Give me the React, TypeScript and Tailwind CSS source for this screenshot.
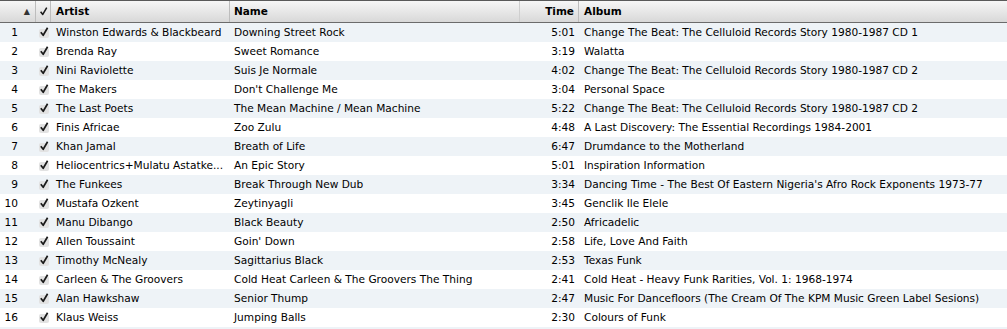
import React from "react";

const rows: [string, string, string, string][] = [
  ["Winston Edwards & Blackbeard", "Downing Street Rock", "5:01", "Change The Beat: The Celluloid Records Story 1980-1987 CD 1"],
  ["Brenda Ray", "Sweet Romance", "3:19", "Walatta"],
  ["Nini Raviolette", "Suis Je Normale", "4:02", "Change The Beat: The Celluloid Records Story 1980-1987 CD 2"],
  ["The Makers", "Don't Challenge Me", "3:04", "Personal Space"],
  ["The Last Poets", "The Mean Machine / Mean Machine", "5:22", "Change The Beat: The Celluloid Records Story 1980-1987 CD 2"],
  ["Finis Africae", "Zoo Zulu", "4:48", "A Last Discovery: The Essential Recordings 1984-2001"],
  ["Khan Jamal", "Breath of Life", "6:47", "Drumdance to the Motherland"],
  ["Heliocentrics+Mulatu Astatke...", "An Epic Story", "5:01", "Inspiration Information"],
  ["The Funkees", "Break Through New Dub", "3:34", "Dancing Time - The Best Of Eastern Nigeria's Afro Rock Exponents 1973-77"],
  ["Mustafa Ozkent", "Zeytinyagli", "3:45", "Genclik Ile Elele"],
  ["Manu Dibango", "Black Beauty", "2:50", "Africadelic"],
  ["Allen Toussaint", "Goin' Down", "2:58", "Life, Love And Faith"],
  ["Timothy McNealy", "Sagittarius Black", "2:53", "Texas Funk"],
  ["Carleen & The Groovers", "Cold Heat Carleen & The Groovers The Thing", "2:41", "Cold Heat - Heavy Funk Rarities, Vol. 1: 1968-1974"],
  ["Alan Hawkshaw", "Senior Thump", "2:47", "Music For Dancefloors (The Cream Of The KPM Music Green Label Sesions)"],
  ["Klaus Weiss", "Jumping Balls", "2:30", "Colours of Funk"],
];

const cols = "grid grid-cols-[36px_15px_179px_290px_59px_1fr]";

function CheckMark({ className }: { className?: string }) {
  return (
    <svg viewBox="0 0 10 10" className={className}>
      <path d="M1.8 5.2 L4.2 8.3 L8.6 0.8" fill="none" stroke="#1a1a1a" strokeWidth="1.7" strokeLinejoin="round" />
    </svg>
  );
}

function Check() {
  return (
    <span className="relative block h-[9px] w-[10px] rounded-[2px] bg-[#e2e2e2]">
      <CheckMark className="absolute left-[0px] top-[-2px] h-[10px] w-[10px]" />
    </span>
  );
}

export default function App() {
  return (
    <div className="h-[329px] w-[1007px] overflow-hidden bg-white font-['DejaVu_Sans',sans-serif] text-[10.6px] text-black">
      <div className="border-t border-t-[#5a5a5a] border-b border-b-[#6b6b6b] bg-gradient-to-b from-[#f7f7f7] to-[#d8d8d8]">
        <div className={`${cols} h-[21px] text-[10.5px] font-bold`}>
          <div className="flex items-center justify-end border-r border-r-[#bdbdbd] pr-[5px]">
            <span className="text-[8px] text-[#333]">▲</span>
          </div>
          <div className="flex items-center justify-center border-r border-r-[#bdbdbd]">
            <CheckMark className="h-[9px] w-[9px]" />
          </div>
          <div className="flex items-center border-r border-r-[#bdbdbd] pl-[5px]">Artist</div>
          <div className="flex items-center border-r border-r-[#cfcfcf] pl-[4px]">Name</div>
          <div className="flex items-center justify-end border-r border-r-[#bdbdbd] pr-[4px]">Time</div>
          <div className="flex items-center pl-[5px]">Album</div>
        </div>
      </div>
      {rows.map((r, i) => (
        <div key={i} className={`${cols} h-[19px] items-center pt-[1px] ${i % 2 === 0 ? "bg-[#eef3f7]" : "bg-white"}`}>
          <div className="pr-[18px] text-right">{i + 1}</div>
          <div className="flex justify-center pt-[1px]"><Check /></div>
          <div className="truncate pl-[5px]">{r[0]}</div>
          <div className="truncate pl-[4px]">{r[1]}</div>
          <div className="pr-[4px] text-right">{r[2]}</div>
          <div className="truncate pl-[5px]">{r[3]}</div>
        </div>
      ))}
      <div className="h-[19px] bg-[#eef3f7]" />
    </div>
  );
}
